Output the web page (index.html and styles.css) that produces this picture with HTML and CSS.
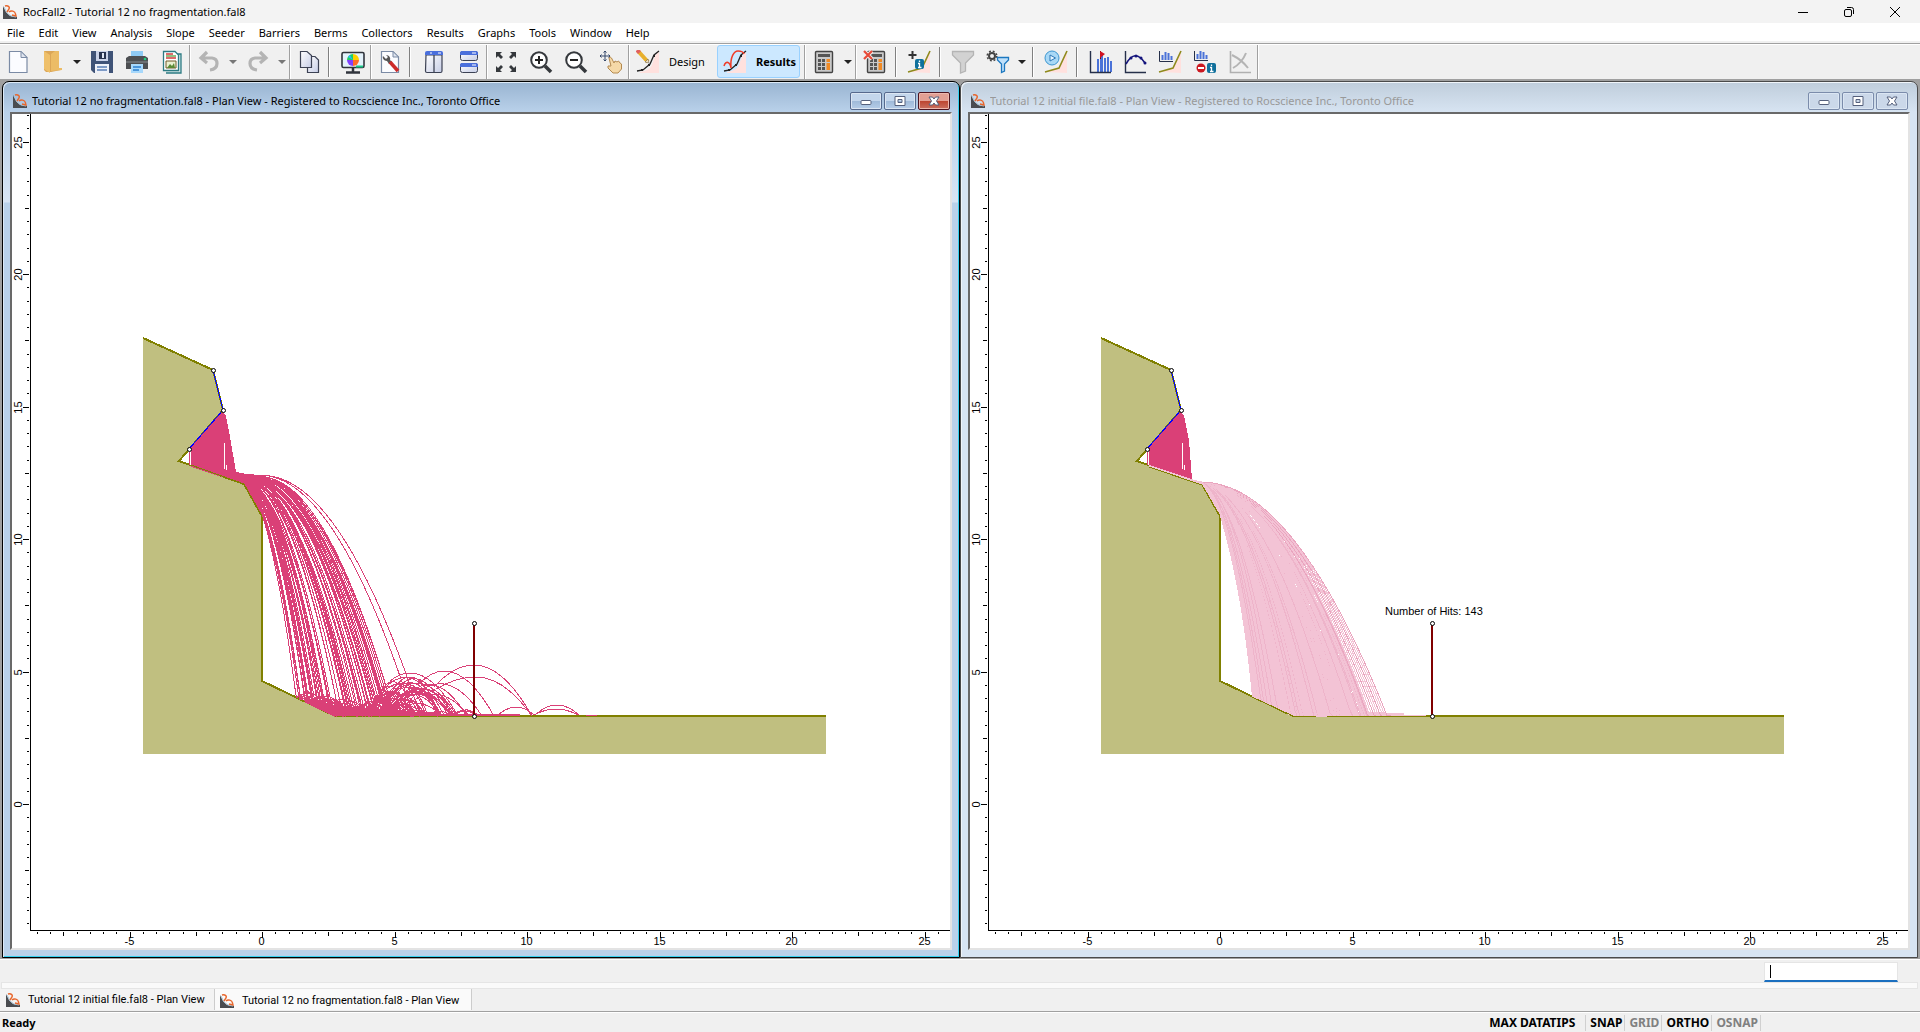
FILE: index.html
```
<!DOCTYPE html>
<html lang="en">
<head>
<meta charset="utf-8">
<title>RocFall2 - Tutorial 12 no fragmentation.fal8</title>
<link rel="stylesheet" href="styles.css">
</head>
<body>
<svg class="defs" width="0" height="0" aria-hidden="true">
  <symbol id="logo" viewBox="0 0 14 14"><path d="M0 1L3 7L7 11L14 12V14H0Z" fill="#4a4c50"/><path d="M1 2L4 8L8 11L13 12" stroke="#a9c4d6" fill="none"/><path d="M2 1C5 0 7 2 6 4L4 7M6 7C8 5 12 6 12.500 9L13 11L9 10" fill="none" stroke="#e8662c" stroke-width="1.400"/></symbol>
  <symbol id="slope" viewBox="0 0 24 24"><path d="M4 22C14 20 15 18 17 12S20 3 23 2V23H4Z" fill="#ffe1de"/><path d="M1 21L7 20L14 14L18 5L23 1" fill="none" stroke="#222" stroke-width="1.3"/><path d="M5 19h2v2H5zM12 14h2v2h-2zM17 5h2v2h-2z" fill="#222"/></symbol>
  <symbol id="olive" viewBox="0 0 24 24"><path d="M3 22L15 18L23 2V23Z" fill="#ffe1de"/><path d="M1 22L15 18L23 1" fill="none" stroke="#8f8a1c" stroke-width="1.6"/></symbol>
  <symbol id="calc" viewBox="0 0 24 24"><rect x="3.5" y="1.5" width="17" height="21" rx="1" fill="#c9c9c9" stroke="#444" stroke-width="1.4"/><path d="M6 4h12v3H6z" fill="#555"/><path d="M6 9h3v3H6zM10 9h3v3h-3zM6 13h3v3H6zM10 13h3v3h-3zM6 17h3v3H6zM10 17h3v3h-3z" fill="#555"/><path d="M14.500 9h3.500v3h-3.500zM14.500 13h3.500v7h-3.500z" fill="#f08a24"/></symbol>
  <symbol id="minus" viewBox="0 0 14 14"><rect x="2" y="6.500" width="10" height="4" rx="1" fill="#fff" stroke="#55607c"/></symbol>
  <symbol id="square" viewBox="0 0 14 14"><path d="M2 2.500H12V11.500H2ZM5 5.500V8.500H9V5.500Z" fill="#fff" fill-rule="evenodd" stroke="#55607c"/></symbol>
  <symbol id="cross" viewBox="0 0 14 14"><path d="M2 3H5.500L7 5L8.500 3H12L9.500 7L12 11H8.500L7 9L5.500 11H2L4.500 7Z" fill="#fff" stroke="#55607c"/></symbol>
  <linearGradient id="paper" x1="0" y1="0" x2="1" y2="1"><stop offset="0" stop-color="#fff"/><stop offset="1" stop-color="#c6cde6"/></linearGradient>
</svg>

<header class="titlebar">
  <svg class="logo"><use href="#logo"/></svg>
  <span class="apptitle">RocFall2 - Tutorial 12 no fragmentation.fal8</span>
  <div class="syscontrols">
    <button aria-label="Minimize"><svg viewBox="0 0 12 12"><path d="M1 6.500H11" stroke="#000"/></svg></button>
    <button aria-label="Restore"><svg viewBox="0 0 12 12"><rect x="1.500" y="3.500" width="7" height="7" rx="1.500" fill="none" stroke="#000"/><path d="M4 1.500H8.500Q10.500 1.500 10.500 3.500V8" fill="none" stroke="#000"/></svg></button>
    <button aria-label="Close"><svg viewBox="0 0 12 12"><path d="M1 1L11 11M11 1L1 11" stroke="#000"/></svg></button>
  </div>
</header>

<nav class="menubar">
  <button>File</button><button>Edit</button><button>View</button><button>Analysis</button><button>Slope</button><button>Seeder</button><button>Barriers</button><button>Berms</button><button>Collectors</button><button>Results</button><button>Graphs</button><button>Tools</button><button>Window</button><button>Help</button>
</nav>

<div class="toolbar" role="toolbar">
  <button class="tool" aria-label="New"><svg viewBox="0 0 24 24"><path d="M3.500 1.500H15L21 7.500V22.500H3.500Z" fill="#fbfcff" stroke="#7b8ba5" stroke-width="1.200"/><path d="M15 1.500V7.500H21Z" fill="#dfe4ee" stroke="#7b8ba5"/></svg></button>
  <button class="tool" aria-label="Open"><svg viewBox="0 0 24 24"><path d="M3 1H14V19H20V20L10 22H5L3 20Z" fill="#dba657"/><path d="M3 1L9 5V23L3 19Z" fill="#efc06a"/><path d="M14 1H18V18H21V20L10 21V4Z" fill="#ecbc66"/></svg></button>
  <button class="caret" aria-label="Open options"></button>
  <button class="tool" aria-label="Save"><svg viewBox="0 0 24 24"><path d="M1 1H23V23H4L1 20Z" fill="#3f5377"/><path d="M6 1H18V11H6Z" fill="#c9d2e8"/><path d="M9 2H16V9H9Z" fill="#26324e"/><path d="M12 3h2v5h-2z" fill="#dfe6f4"/><path d="M5 14H19V23H5Z" fill="#eef1f8"/><path d="M7 17H17M7 20H17" stroke="#5a7fb5" stroke-width="1.500"/></svg></button>
  <button class="tool" aria-label="Print"><svg viewBox="0 0 24 24"><path d="M6 1H18V8H6Z" fill="#8fcaf4"/><path d="M1 8L4 6H20L23 8V19H1Z" fill="#4d4f52"/><path d="M1 12H23" stroke="#6b6e72" stroke-width="2"/><path d="M6 14H18V23H6Z" fill="#a7d8fb"/><path d="M8 17H16M8 20H14" stroke="#2d7fd0" stroke-width="1.500"/><circle cx="20" cy="9" r="1.300" fill="#20d080"/></svg></button>
  <button class="tool" aria-label="Report"><svg viewBox="0 0 24 24"><path d="M8 4H21V23H6" fill="#cfe3e4" stroke="#2d7b83" stroke-width="1.300"/><path d="M3.500 1.500H15L18.500 5V20.500H3.500Z" fill="#fff" stroke="#2d7b83" stroke-width="1.300"/><path d="M6 4H13M6 8H16" stroke="#d33b3b" stroke-width="1.300"/><path d="M6 6H16" stroke="#52a040" stroke-width="1.300"/><path d="M6 11H16V18H6Z" fill="#eaf0d0" stroke="#705a28"/><path d="M7 18L10 14L12 16L14 13L15 18Z" fill="#5a8a35"/></svg></button>
  <span class="sep"></span>
  <button class="tool" aria-label="Undo"><svg viewBox="0 0 24 24"><path d="M10 2L4 8L10 13M5 8H15Q20 8.500 20 13.500Q20 19 13 20" fill="none" stroke="#b4b4b4" stroke-width="3.200"/></svg></button>
  <button class="caret dim" aria-label="Undo list"></button>
  <button class="tool" aria-label="Redo"><svg viewBox="0 0 24 24"><path d="M14 2L20 8L14 13M19 8H9Q4 8.500 4 13.500Q4 19 11 20" fill="none" stroke="#b4b4b4" stroke-width="3.200"/></svg></button>
  <button class="caret dim" aria-label="Redo list"></button>
  <span class="sep"></span>
  <button class="tool" aria-label="Copy"><svg viewBox="0 0 24 24"><path d="M13 6.500H18L21.500 10V22.500H10.500V8Z" fill="url(#paper)" stroke="#3c4254" stroke-width="1.200"/><path d="M3.500 1.500H10L14.500 5.500V17.500H3.500Z" fill="url(#paper)" stroke="#3c4254" stroke-width="1.200"/></svg></button>
  <span class="sep short"></span>
  <button class="tool" aria-label="Display options"><svg viewBox="0 0 24 24"><rect x="1" y="2.500" width="22" height="15" rx="1.500" fill="#e4f2fb" stroke="#30343c" stroke-width="1.600"/><path d="M12 4A6 6 0 0 1 18 10H12Z" fill="#ffd200"/><path d="M18 10A6 6 0 0 1 12 16V10Z" fill="#ff6a28"/><path d="M12 16A6 6 0 0 1 6 10H12Z" fill="#8040ff"/><path d="M6 10A6 6 0 0 1 12 4V10Z" fill="#20d060"/><path d="M9 5L12 10L7 7Z" fill="#28b8ff"/><path d="M12 18V22M5 22.500H19" stroke="#30343c" stroke-width="2.500"/><path d="M15 16.500H22" stroke="#18c888" stroke-width="2"/></svg></button>
  <span class="sep"></span>
  <button class="tool" aria-label="Project settings"><svg viewBox="0 0 24 24"><path d="M3.500 1.500H15L20.500 7V22.500H3.500Z" fill="#fbfcff" stroke="#7b8ba5" stroke-width="1.200"/><path d="M15 1.500V7H20.500Z" fill="#dfe4ee" stroke="#7b8ba5"/><path d="M5 6L8 9L10 7L8 5C11 5 13 8 12 10L14 12L11 14L9 11C6 11 4 8 5 6" fill="#555"/><path d="M12 12L20 21" stroke="#cc2a2a" stroke-width="3.500"/></svg></button>
  <span class="sep short"></span>
  <button class="tool" aria-label="Tile vertically"><svg viewBox="0 0 24 24"><path d="M4 5H20V21Q20 22.500 18.500 22.500H5Q3.500 22.500 3.500 21Z" fill="url(#paper)" stroke="#3c4254" stroke-width="1.200"/><path d="M12 5V22" stroke="#3c4254" stroke-width="1.300"/><path d="M3 5V3Q3 1 5 1H19Q21 1 21 3V5Z" fill="#4a6fdc"/><path d="M8 3H10M16 3H19" stroke="#fff"/></svg></button>
  <button class="tool" aria-label="Tile horizontally"><svg viewBox="0 0 24 24"><rect x="3.500" y="1.500" width="17" height="9" rx="2" fill="url(#paper)" stroke="#3c4254"/><rect x="3.500" y="13.500" width="17" height="9" rx="2" fill="url(#paper)" stroke="#3c4254"/><path d="M3 5V3Q3 1 5 1H19Q21 1 21 3V5ZM3 17V15Q3 13 5 13H19Q21 13 21 15V17Z" fill="#4a6fdc"/><path d="M15 3H19M15 15H19" stroke="#fff"/></svg></button>
  <span class="sep"></span>
  <button class="tool" aria-label="Zoom all"><svg viewBox="0 0 24 24"><path d="M2 8V2H8L6 4L9 7L7 9L4 6ZM16 2H22V8L20 6L17 9L15 7L18 4ZM22 16V22H16L18 20L15 17L17 15L20 18ZM8 22H2V16L4 18L7 15L9 17L6 20Z" fill="#35383c"/></svg></button>
  <button class="tool" aria-label="Zoom in"><svg viewBox="0 0 24 24"><circle cx="10" cy="10" r="7.800" fill="#fff" stroke="#35383c" stroke-width="2"/><path d="M10 6V14M6 10H14" stroke="#222" stroke-width="2"/><path d="M16 16L22 22" stroke="#35383c" stroke-width="3.500"/></svg></button>
  <button class="tool" aria-label="Zoom out"><svg viewBox="0 0 24 24"><circle cx="10" cy="10" r="7.800" fill="#fff" stroke="#35383c" stroke-width="2"/><path d="M6 10H14" stroke="#222" stroke-width="2"/><path d="M16 16L22 22" stroke="#35383c" stroke-width="3.500"/></svg></button>
  <button class="tool" aria-label="Pan"><svg viewBox="0 0 24 24"><path d="M6 1V11M1 6H11M4.500 2.500L6 1L7.500 2.500M4.500 9.500L6 11L7.500 9.500M2.500 4.500L1 6L2.500 7.500M9.500 4.500L11 6L9.500 7.500" fill="none" stroke="#35486a"/><path d="M10 8Q11 6 12.500 8L15 13L16 11L18 12L19.500 11L21 13L22.500 14V19L19 23H14L9 18Q8 15 11 16L12 16Z" fill="#f5d9a8" stroke="#b48a50"/></svg></button>
  <span class="sep"></span>
  <button class="tool mode"><svg viewBox="0 0 24 24"><use href="#slope"/><path d="M2 1L12 12" stroke="#e8b02c" stroke-width="4"/><path d="M1 0L3.500 2.700" stroke="#e06060" stroke-width="4"/><path d="M13 13L9 12L12 9Z" fill="#f3dfba" stroke="#555" stroke-width=".5"/></svg><span>Design</span></button>
  <button class="tool mode active"><svg viewBox="0 0 24 24"><use href="#slope"/><path d="M1 16C3 10 7 12 8 18C7 7 11 1 15 1Q20 1 21 4" fill="none" stroke="#f03c28" stroke-width="1.500"/></svg><span>Results</span></button>
  <span class="sep"></span>
  <button class="tool" aria-label="Compute"><svg viewBox="0 0 24 24"><use href="#calc"/></svg></button>
  <button class="caret" aria-label="Compute options"></button>
  <span class="sep"></span>
  <button class="tool" aria-label="Clear results"><svg viewBox="0 0 24 24"><use href="#calc" x="1"/><path d="M1 1L9 9M9 1L1 9" stroke="#f0f0f0" stroke-width="4"/><path d="M1 1L9 9M9 1L1 9" stroke="#e84a38" stroke-width="2.200"/></svg></button>
  <span class="sep tight"></span>
  <button class="tool" aria-label="Add data tip"><svg viewBox="0 0 24 24"><use href="#olive"/><path d="M5.500 1V9M1.500 5H9.500" stroke="#333" stroke-width="2"/><rect x="8" y="9" width="9" height="10" rx="2" fill="#10709c"/><path d="M12.500 10.500v1.500M11 13.500h1.500v4M11 17.500h3.500" stroke="#fff" stroke-width="1.300" fill="none"/></svg></button>
  <span class="sep tight"></span>
  <button class="tool" aria-label="Filter"><svg viewBox="0 0 24 24"><path d="M1.500 1.500H22.500V5L14.500 13V21L9.500 23V13L1.500 5Z" fill="#d2d2d2" stroke="#b4b4b4" stroke-width="1.300"/></svg></button>
  <button class="tool" aria-label="Filter settings"><svg viewBox="0 0 24 24"><circle cx="6" cy="6" r="3" fill="none" stroke="#444" stroke-width="2"/><circle cx="6" cy="6" r="4.800" fill="none" stroke="#444" stroke-width="1.500" stroke-dasharray="1.900 1.900"/><path d="M11.500 7.500H22.500V10L18.500 14V21L15.500 22.500V14L11.500 10Z" fill="#bfe0fa" stroke="#1c78c0" stroke-width="1.300"/></svg></button>
  <button class="caret" aria-label="Filter options"></button>
  <span class="sep tight"></span>
  <button class="tool" aria-label="Animate"><svg viewBox="0 0 24 24"><use href="#olive"/><circle cx="8" cy="8" r="7" fill="#a8d8f6" stroke="#3c96d0"/><path d="M6 5L11.500 8L6 11Z" fill="#e8f6ff" stroke="#2c78b8"/></svg></button>
  <span class="sep tight"></span>
  <button class="tool" aria-label="Endpoint graph"><svg viewBox="0 0 24 24"><path d="M9 9h2v13H9zM12 5h3v17h-3zM16 8h2v14h-2zM19 7h2v15h-2zM22 11h2v11h-2z" fill="#4a72d8"/><path d="M2.500 1V22.500H23" fill="none" stroke="#26304a" stroke-width="1.400"/><path d="M12.500 1V9" stroke="#700" /><path d="M12 1L17 4L12 8Z" fill="#d01020"/></svg></button>
  <button class="tool" aria-label="Path graph"><svg viewBox="0 0 24 24"><path d="M2.500 1V22.500H23" fill="none" stroke="#26304a" stroke-width="1.400"/><path d="M3 14Q12-2 22 13" fill="none" stroke="#14147c" stroke-width="1.600"/><circle cx="8" cy="8" r="1.500" fill="#14147c"/><circle cx="13" cy="6" r="1.500" fill="#14147c"/><circle cx="18" cy="8" r="1.500" fill="#14147c"/><circle cx="22" cy="13" r="1.500" fill="#14147c"/></svg></button>
  <button class="tool" aria-label="Slope distribution"><svg viewBox="0 0 24 24"><use href="#olive"/><path d="M1.500 1V11.500H15" fill="none" stroke="#26304a"/><path d="M4.500 5V10M7.500 2V10M10.500 3V10M13.500 6V10" stroke="#4a72d8" stroke-width="2"/></svg></button>
  <button class="tool" aria-label="Collector graph"><svg viewBox="0 0 24 24"><path d="M1.500 1V10.500H15" fill="none" stroke="#26304a"/><path d="M4.500 4V9M7.500 1V9M10.500 2V9M13.500 5V9" stroke="#4a72d8" stroke-width="2"/><circle cx="8" cy="18" r="4.500" fill="#cc1820"/><path d="M5 18H11" stroke="#fff" stroke-width="2"/><rect x="14" y="13" width="9" height="10" rx="2" fill="#10709c"/><path d="M18.500 14.500v1.500M17 17.500h1.500v4M17 21.500h3.500" stroke="#fff" stroke-width="1.300" fill="none"/></svg></button>
  <button class="tool" aria-label="Crossplot"><svg viewBox="0 0 24 24"><path d="M2.500 1V22.500H23" fill="none" stroke="#b0b0b0" stroke-width="1.600"/><path d="M4 5Q14 10 20 18M18 3Q14 13 5 18" fill="none" stroke="#b4b4b4" stroke-width="2"/></svg></button>
  <span class="sep"></span>
</div>

<main class="mdi">
  <section class="child current">
    <header class="caption">
      <svg class="logo"><use href="#logo"/></svg>
      <h2>Tutorial 12 no fragmentation.fal8 - Plan View - Registered to Rocscience Inc., Toronto Office</h2>
      <button aria-label="Minimize"><svg><use href="#minus"/></svg></button>
      <button aria-label="Maximize"><svg><use href="#square"/></svg></button>
      <button class="close" aria-label="Close"><svg><use href="#cross"/></svg></button>
    </header>
    <div class="view"><svg class="plot" data-run="bounce"></svg></div>
  </section>
  <section class="child">
    <header class="caption">
      <svg class="logo"><use href="#logo"/></svg>
      <h2>Tutorial 12 initial file.fal8 - Plan View - Registered to Rocscience Inc., Toronto Office</h2>
      <button aria-label="Minimize"><svg><use href="#minus"/></svg></button>
      <button aria-label="Maximize"><svg><use href="#square"/></svg></button>
      <button aria-label="Close"><svg><use href="#cross"/></svg></button>
    </header>
    <div class="view"><svg class="plot" data-run="initial"></svg></div>
  </section>
</main>

<div class="prompt"><input type="text" aria-label="Coordinates"></div>
<div class="tabstrip"></div>
<nav class="tabs">
  <button><svg class="logo"><use href="#logo"/></svg><span>Tutorial 12 initial file.fal8 - Plan View</span></button>
  <button class="active"><svg class="logo"><use href="#logo"/></svg><span>Tutorial 12 no fragmentation.fal8 - Plan View</span></button>
</nav>
<footer class="status">
  <span class="ready">Ready</span>
  <button>MAX DATATIPS</button><button>SNAP</button><button class="off">GRID</button><button>ORTHO</button><button class="off">OSNAP</button>
</footer>
<script src="plot.js"></script>
</body>
</html>
```
FILE: styles.css
```
* { box-sizing: border-box; }
body {
  margin: 0;
  min-height: 100vh;
  display: flex;
  flex-direction: column;
  background: #f0f0f0;
  color: #000;
  font: 12px/16px "Noto Sans", "Open Sans", sans-serif;
}
button {
  font: inherit;
  color: inherit;
  background: none;
  border: 0;
  padding: 0;
  margin: 0;
}
.defs { position: absolute; }
.logo { width: 14px; height: 14px; flex: none; }

.titlebar { display: flex; align-items: center; height: 23px; padding: 0 2px 0 3px; background: #f3f3f3; }
.apptitle { margin-left: 6px; flex: 1; font-size: 11px; }
.syscontrols { display: flex; }
.syscontrols button { width: 46px; height: 22px; display: flex; align-items: center; justify-content: center; }
.syscontrols svg { width: 12px; height: 12px; }

.menubar { display: flex; gap: 14px; height: 20px; padding: 1px 0 0 7px; background: #fff; font-size: 11px; border-bottom: 2px solid #f0f0f0; }

.toolbar { display: flex; align-items: center; height: 36px; border-top: 1px solid #a0a0a0; background: #f0f0f0; box-shadow: inset 0 1px #fff; }
.tool { width: 35px; height: 33px; display: flex; align-items: center; justify-content: center; flex: none; }
.tool svg { width: 24px; height: 24px; flex: none; }
.caret { width: 14px; height: 33px; display: flex; align-items: center; justify-content: center; flex: none; }
.caret::before { content: ""; border: 4px solid transparent; border-top-color: #222; border-bottom: 0; }
.caret.dim::before { border-top-color: #777; }
.sep { width: 2px; height: 34px; background: #a0a0a0; border-right: 1px solid #fff; flex: none; }
.sep.short, .sep.tight { height: 30px; background: #808080; margin: 0 5px 0 2px; }
.sep.tight { margin: 0 4px 0 3px; }
.mode { width: 87px; justify-content: flex-start; padding-left: 6px; gap: 9px; font-size: 11px; }
.mode.active { width: 83px; background: #cce8ff; border: 1px solid #99d1ff; border-radius: 3px; padding-left: 5px; font-weight: bold; margin-right: 4px; }

.mdi { flex: 1; display: grid; grid-template-columns: 1fr 1fr; padding: 2px 2px 1px; min-height: 400px; background: #a0a0a0; border-bottom: 1px solid #fff; }
.child {
  display: flex;
  flex-direction: column;
  min-width: 0;
  padding: 0 7px 7px;
  border: 1px solid #4a4a4a;
  border-radius: 7px 7px 0 0;
  background: linear-gradient(#bfcddb, #d7e4f2 30px);
  box-shadow: inset 1px 1px #f0f5fa;
}
.child.current {
  border-color: #000;
  background: linear-gradient(#99b4d1, #b9d1ea 30px, #d7e4f4 120px, #b9d1ea 121px);
  box-shadow: inset 1px 1px #dce9f6, inset -1px -1px #35d0f0;
}
.caption { display: flex; align-items: center; gap: 2px; height: 30px; padding: 7px 2px 0 3px; }
.child:not(.current) h2 { color: #999; }
.caption h2 { flex: 1; margin: 0 0 0 3px; font-size: 11px; font-weight: normal; white-space: nowrap; overflow: hidden; }
.caption button { width: 32px; height: 18px; display: flex; align-items: center; justify-content: center; border: 1px solid #7b8cab; border-radius: 2px; box-shadow: inset 0 0 0 1px #dbe6f3; background: #cbd8e9; }
.current .caption button { border-color: #56698d; background: linear-gradient(#c3d6ec 50%, #9fbad9 50%, #b6cde8); }
.current .caption .close { border-color: #4d1420; background: linear-gradient(#e3a094 50%, #bc4430 50%, #cb7060); box-shadow: inset 0 0 0 1px #edb8ae; }
.caption button svg { width: 14px; height: 14px; }
.view { flex: 1; min-height: 0; border: 2px solid #696969; border-right-color: #e3e3e3; border-bottom-color: #e3e3e3; background: #fff; overflow: hidden; }
.plot { display: block; width: 100%; height: 100%; font: 11px "Liberation Sans", Arial, sans-serif; }

.prompt { display: flex; justify-content: flex-end; height: 22px; padding: 2px 22px 0 0; }
.prompt input {
  width: 134px;
  height: 20px;
  border: 1px solid #e5e5e5;
  border-bottom: 2px solid #1b6fbf;
  background: linear-gradient(#000, #000) 5px 2px / 1px 13px no-repeat #fff;
  font: inherit;
  outline: 0;
}
.tabstrip { height: 7px; margin: 0 2px 0 1px; background: #fafafa; border: 1px solid #e5e5e5; }
.tabs { display: flex; height: 22px; border-bottom: 1px solid #f0f0f0; }
.tabs button { display: flex; align-items: center; gap: 8px; width: 215px; padding-left: 6px; background: #f3f3f3; font: 11px/16px Roboto, "Noto Sans", sans-serif; white-space: nowrap; border-right: 1px solid #ccc; }
.tabs button.active { width: 257px; background: #fafafa; padding: 2px 0 0 5px; }
.status { display: flex; align-items: center; height: 21px; border-top: 1px solid #a0a0a0; box-shadow: inset 0 1px #fff; font-weight: bold; font-size: 12px; padding: 2px 159px 0 0; }
.ready { flex: 1; padding-left: 2px; font-size: 11px; }
.status button { height: 16px; padding: 0 2px 0 4px; border-right: 1px solid #d0d0d0; }
.status button:nth-of-type(1) { padding-right: 10px; }
.status .off { color: #808080; }
```
FILE: plot.js
```
const NS = 'http://www.w3.org/2000/svg';
const SCALE = 26.5;
const ORIGIN = { x: 250, y: 690 };

function add(parent, name, attrs, text) {
  const el = document.createElementNS(NS, name);
  for (const key in attrs) el.setAttribute(key, attrs[key]);
  if (text !== undefined) el.textContent = text;
  parent.appendChild(el);
  return el;
}

function generator(seed) {
  return () => {
    seed = (seed * 1664525 + 1013904223) % 4294967296;
    return seed / 4294967296;
  };
}

// Drawing coordinates: the slope's own pixel frame, 12,114 at the view corner.
const ground = x => x < 262 ? 484.5 + (x - 244.5) * 1.8 : x < 335 ? 681.5 + (x - 262) * 0.48 : 716;

function fly(x, y, vx, vy) {
  let d = `M${x.toFixed(1)} ${y.toFixed(1)}`;
  for (let i = 0; i < 90; i++) {
    x += vx * 0.5;
    y += vy * 0.5 + 0.125;
    vy += 0.5;
    if (x > 262 && y >= ground(x)) { y = ground(x); d += `L${x.toFixed(1)} ${y.toFixed(1)}`; break; }
    d += `L${x.toFixed(1)} ${y.toFixed(1)}`;
  }
  return { d, x, y };
}

function bounceRun(g) {
  const rnd = generator(12);
  let d = '';
  const launch = s => {
    const hit = fly(240 + rnd() * 6, 479 + rnd() * 4, 2.7 + s * 3.5 + rnd() * 0.1, 1.3 - s * 4);
    d += hit.d;
    return hit;
  };
  const bands = [[0, 0.04, 2], [0.05, 0.34, 26], [0.3, 0.75, 23], [0.72, 1, 24]];
  for (const [a, b, n] of bands) {
    for (let i = 0; i < n; i++) {
      const hit = launch(a + (b - a) * rnd());
      const far = (hit.x - 290) / 100;
      let { x, y } = hit;
      let vx = 1 + rnd() * (1.5 + 3 * far);
      let vy = -(1.5 + rnd() * (1.5 + 5.5 * far));
      for (let k = 0; k < 4 && x < 500; k++) {
        const next = fly(x, y - 0.5, vx, vy);
        d += next.d;
        x = next.x; y = next.y; vy *= 0.45; vx *= 0.85;
      }
    }
  }
  for (let i = 0; i < 60; i++) {
    const x = 300 + rnd() * 110;
    d += fly(x, ground(x) - 1, 1 + rnd() * 3, -(1.5 + rnd() * 3)).d;
  }
  for (let i = 0; i < 24; i++) d += fly(365 + rnd() * 35, 714, 2.5 + rnd() * 3, -(6 + rnd() * 2.7)).d;
  d += fly(240, 479, 7, -2.8).d + fly(241, 480, 7.2, -3).d;
  // Longest rebounds: centre, peak, half width and height.
  const arcs = [[474, 665, 40, 22], [474, 665, -58, 51], [476, 677, 40, 12], [476, 677, -56, 39], [444, 671, 26, 14], [444, 671, -50, 45], [410, 673, 20, 8], [410, 673, -48, 43], [516, 707, 18, 8], [516, 707, -18, 8], [557, 705, 22, 10], [557, 705, -22, 10], [556, 709, 22, 6], [556, 709, -22, 6]];
  for (const [x, y, w, h] of arcs) d += `M${x} ${y}Q${x - w / 2} ${y} ${x - w} ${y + h}`;
  d += 'M586 715H597';
  add(g, 'polygon', { points: '304,702 345,706 390,710 440,714 520,714 520,716 335,716', fill: '#da4077' });
  add(g, 'path', { d, fill: 'none', stroke: '#da4077' });
  add(g, 'polygon', { points: '223,411 226,416 230,437 236,472 246,474 262,475 272,480 262,487 244,484 191,467 191,447', fill: '#da4077' });
  add(g, 'polygon', { points: '238,474 252,476 258,490 262,516 244,484', fill: '#da4077' });
}

function initialRun(g) {
  const rnd = generator(7);
  add(g, 'path', { d: 'M236 480L246 482Q290 497 335 580T398 716H335L294 697Q284 590 262 516L244 484Z', fill: '#f3c3d5' });
  add(g, 'polygon', { points: '335,712 408,712 446,713 446,715 490,716 335,717', fill: '#f3c3d5' });
  for (let i = 0; i < 110; i++) {
    const s = Math.pow(rnd(), 0.7);
    add(g, 'path', {
      d: fly(243 + rnd() * 3, 482 + rnd() * 2, 2.7 + s * 5, 1.2 - s * 1.1).d,
      fill: 'none', stroke: i % 4 ? '#f3c3d5' : '#eeb4ca'
    });
  }
  for (let i = 0; i < 10; i++) {
    add(g, 'path', { d: fly(244, 482, 7.7 + i * 0.1, 0.1).d, fill: 'none', stroke: i % 3 ? '#f3c3d5' : '#eaa5bf' });
  }
  add(g, 'polygon', { points: '223,411 226,416 231,440 234,480 191,467 191,447', fill: '#da4077' });
  add(g, 'path', { d: 'M191 466L246 484', stroke: '#f3c3d5', 'stroke-width': 2 });
}

function slope(g, run) {
  add(g, 'path', { d: 'M143 338L213 370L223 410L179 461L244 484L262 516V681L335 716H826V754H143Z', fill: '#c0bf80' });
  add(g, 'path', { d: 'M143 338L213 370L223 410L179 461L244 484L262 516V681L335 716H826', fill: 'none', stroke: '#808000', 'stroke-width': 2 });
  run === 'bounce' ? bounceRun(g) : initialRun(g);
  if (run === 'bounce') add(g, 'path', { d: 'M191 465L244 484L262 516M380 716H410M466 716H500', fill: 'none', stroke: '#808000' });
  if (run === 'initial') add(g, 'path', { d: 'M191 467L244 485L262 516M294 697L335 716H358M369 716H820', fill: 'none', stroke: '#808000' });
  add(g, 'path', { d: 'M213 370L223 410L189 449', fill: 'none', stroke: '#0000ff' });
  add(g, 'path', { d: 'M190.500 453V465M224.500 443V469M226.500 465V470', stroke: '#fff' });
  add(g, 'path', { d: 'M189.500 452V465', stroke: '#da4077' });
  add(g, 'path', { d: 'M474 624V716', stroke: '#800000', 'stroke-width': 2 });
  for (const [cx, cy] of [[213.5, 370.5], [223.5, 410.5], [189.5, 449.5], [474.5, 623.5], [474.5, 716.5]]) {
    add(g, 'circle', { cx, cy, r: 2, fill: '#fff', stroke: '#000', 'shape-rendering': 'auto' });
  }
  if (run === 'initial') add(g, 'text', { x: 427, y: 615 }, 'Number of Hits: 143');
}

function rulers(svg, w, h) {
  const axisX = 18;
  const axisY = h - 18;
  let d = `M${axisX + 0.5} 0V${axisY + 0.5}H${w}`;
  const length = i => i % 10 === 0 ? 6 : i % 5 === 0 ? 4 : 2;
  for (let i = -60; i < 200; i++) {
    const x = Math.round(ORIGIN.x + i * SCALE / 2) + 0.5;
    if (x > axisX && x < w) {
      d += `M${x} ${axisY + 2}v${length(i)}`;
      if (i % 10 === 0) add(svg, 'text', { x: x - 1, y: axisY + 15, 'text-anchor': 'middle' }, i / 2);
    }
    const y = Math.round(ORIGIN.y - i * SCALE / 2) + 0.5;
    if (y > 0 && y < axisY) {
      d += `M${axisX - 1} ${y}h${-length(i)}`;
      if (i % 10 === 0) add(svg, 'text', { transform: `translate(10 ${y}) rotate(-90)`, 'text-anchor': 'middle' }, i / 2);
    }
  }
  add(svg, 'path', { d, fill: 'none', stroke: '#000', 'shape-rendering': 'crispEdges' });
}

function draw() {
  for (const svg of document.querySelectorAll('.plot')) {
    svg.replaceChildren();
    const g = add(svg, 'g', { transform: 'translate(-12 -114)', 'shape-rendering': 'crispEdges' });
    slope(g, svg.dataset.run);
    rulers(svg, svg.clientWidth, svg.clientHeight);
  }
}
draw();
window.addEventListener('resize', draw);
```
